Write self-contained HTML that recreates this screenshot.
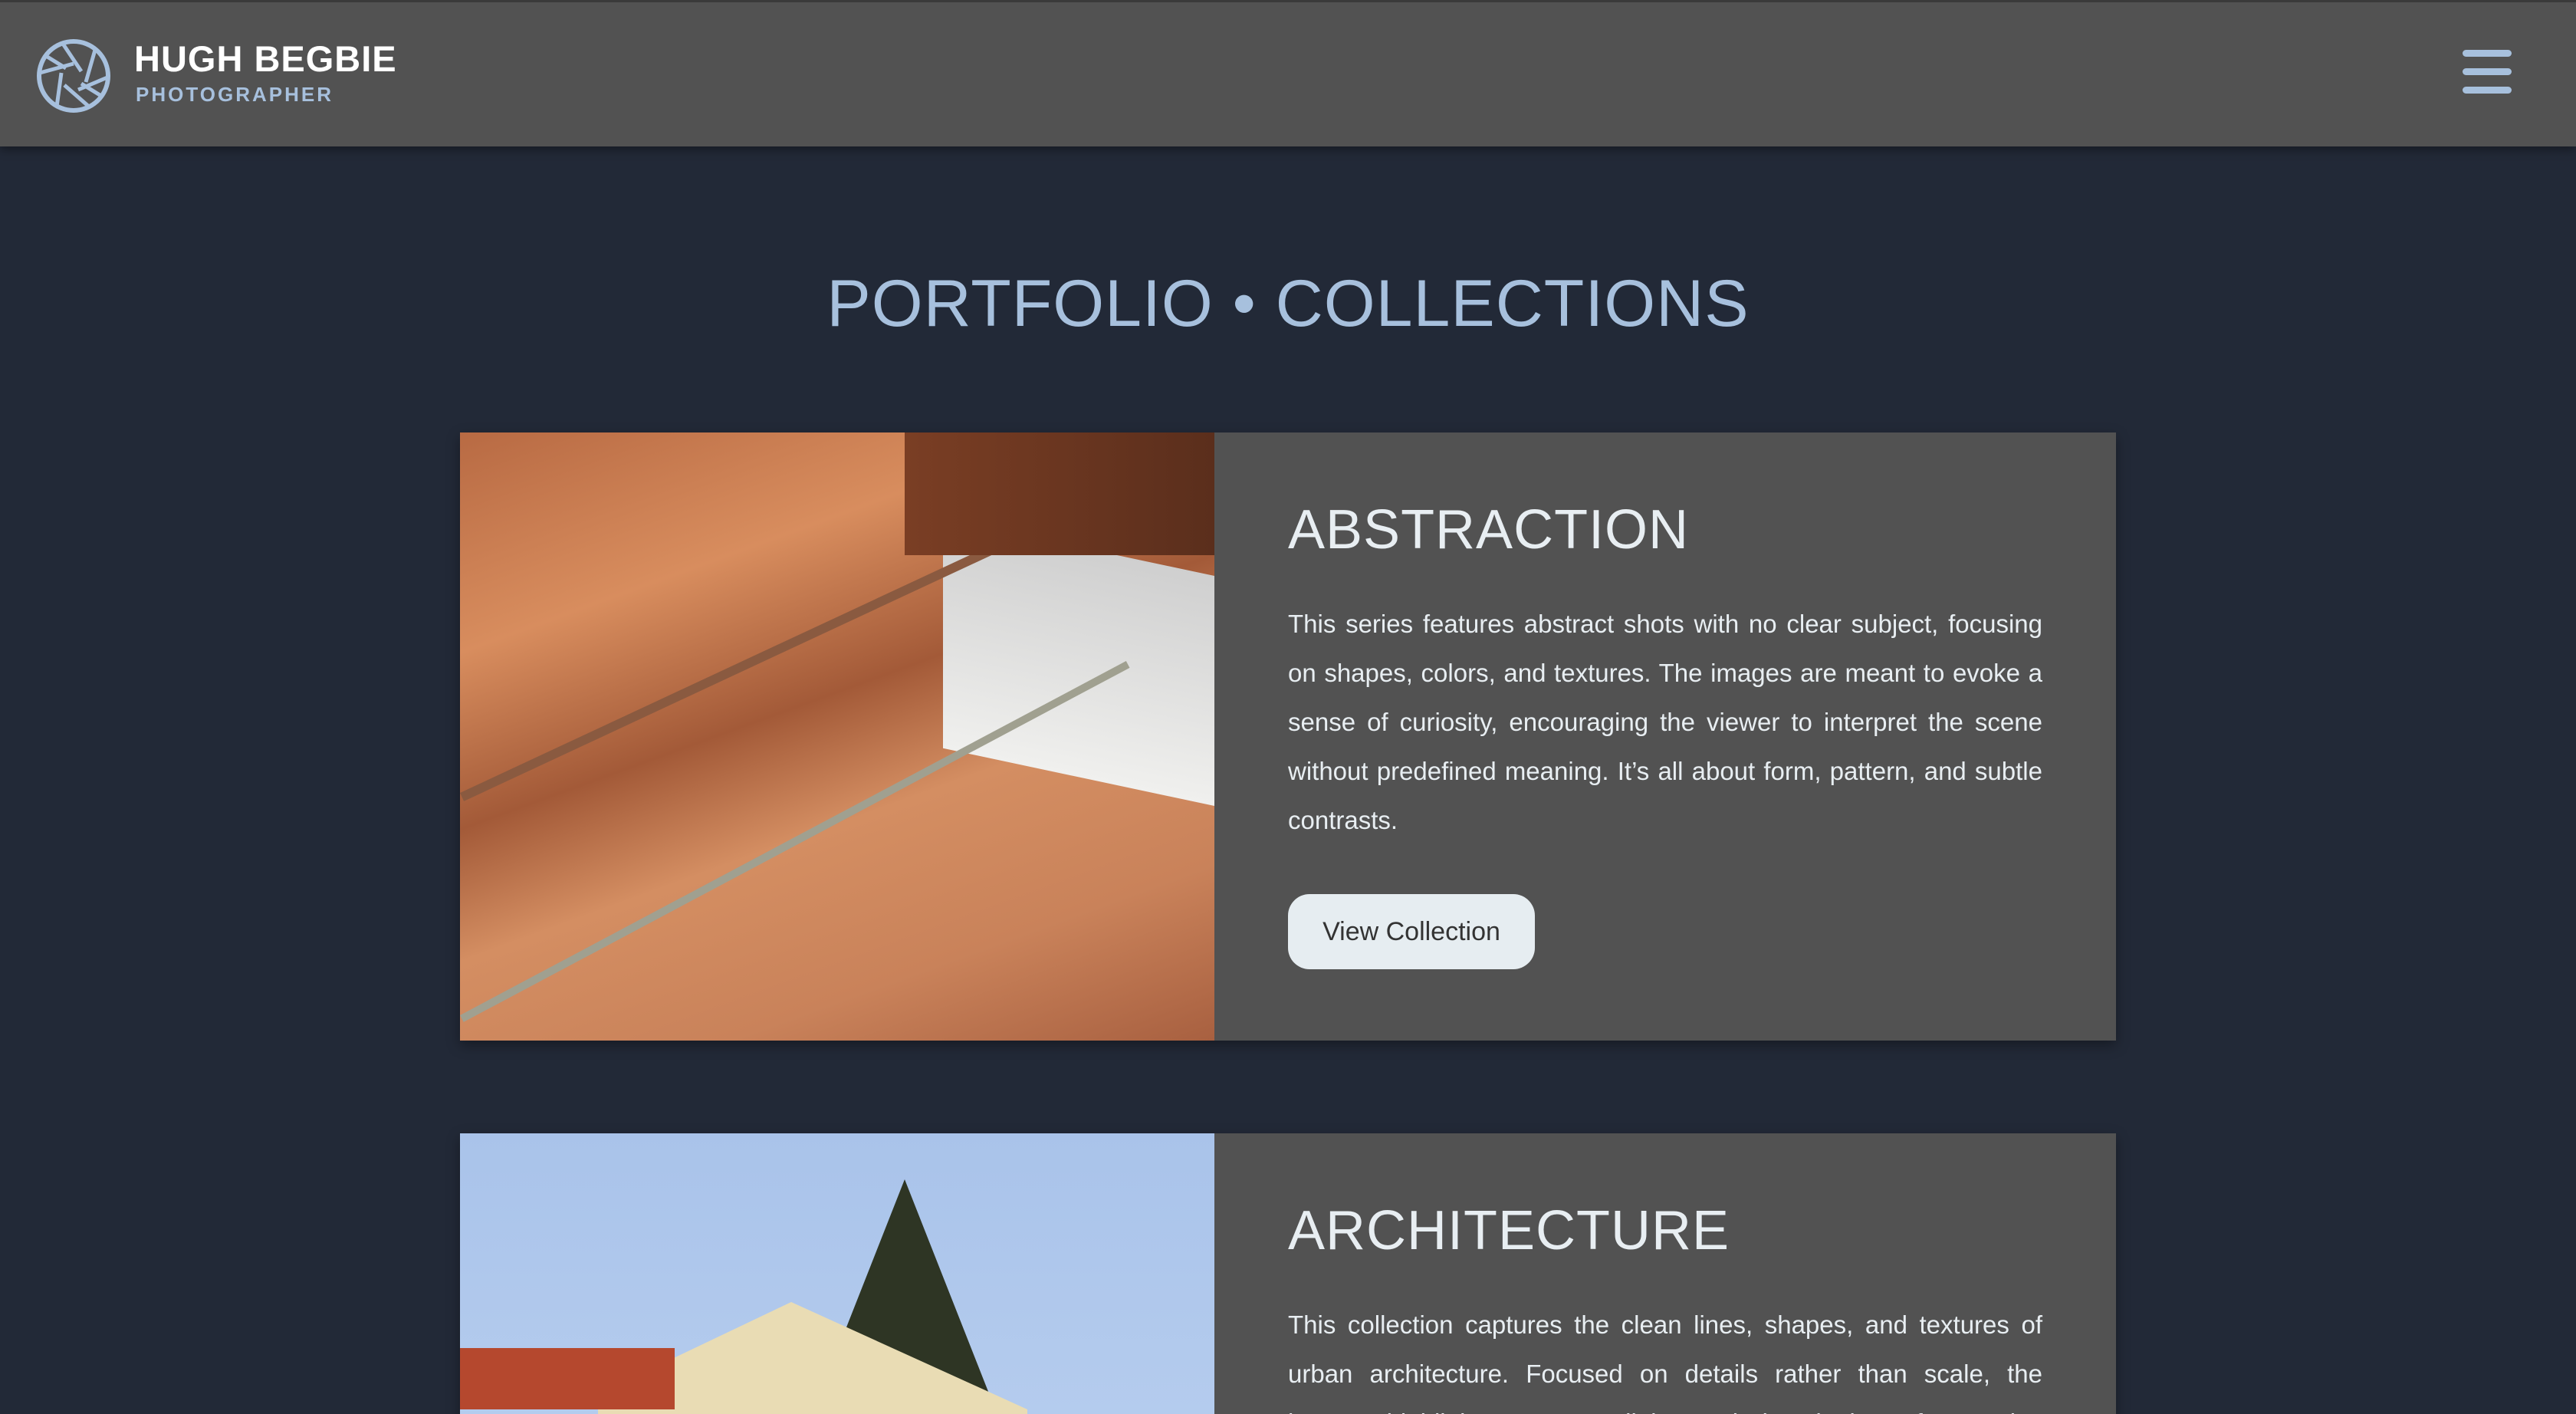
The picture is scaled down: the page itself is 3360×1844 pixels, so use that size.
<!DOCTYPE html>
<html><head><meta charset="utf-8"><style>
*{margin:0;padding:0;box-sizing:border-box}
html,body{width:3360px;height:1844px;overflow:hidden}
body{background:#222937;font-family:"Liberation Sans",sans-serif;position:relative}
.wrap{position:relative;width:3360px;height:1844px;overflow:hidden}
.hdr{position:absolute;left:0;top:0;width:3360px;height:191px;background:#525252;border-top:3px solid #3a3a3a;box-shadow:0 4px 12px rgba(0,0,0,.4);z-index:2}
.logo{position:absolute;left:46px;top:46px;width:100px;height:100px}
.name{position:absolute;left:175px;top:46px;color:#fff;font-weight:bold;font-size:47px;letter-spacing:1px}
.sub{position:absolute;left:177px;top:105px;color:#a7c0dd;font-weight:bold;font-size:26px;letter-spacing:3px}
.burger{position:absolute;left:3212px;top:62px;width:64px}
.burger i{display:block;height:9px;background:#a7c0dd;border-radius:5px;margin-bottom:15px}
h1{position:absolute;left:0;width:3360px;top:347px;text-align:center;color:#a7c0dd;font-size:86px;font-weight:normal;letter-spacing:1px}
.card{position:absolute;left:600px;width:2160px;height:793px;background:#525252;box-shadow:0 6px 16px rgba(0,0,0,.35)}
.img{position:absolute;left:0;top:0;width:984px;height:100%;overflow:hidden}
.txt{position:absolute;left:1080px;top:86px;width:984px;color:#e8eef2}
.txt h2{font-size:72px;font-weight:normal;letter-spacing:1px;margin-bottom:50px}
.txt p{font-size:33px;line-height:64px;text-align:justify;font-weight:normal}
.btn{display:inline-block;margin-top:64px;width:322px;height:98px;border-radius:28px;background:#e6edf1;color:#333;font-size:34px;line-height:98px;text-align:center}
</style></head><body><div class="wrap">
<div class="hdr">
<svg class="logo" viewBox="0 0 100 100" fill="none" stroke="#a7c0dd" stroke-width="6">
<circle cx="50" cy="50" r="45"/>
<g stroke-width="5">
<line x1="36" y1="8" x2="60" y2="44"/><line x1="78" y1="16" x2="66" y2="58"/><line x1="94" y1="52" x2="56" y2="68"/>
<line x1="70" y1="90" x2="38" y2="62"/><line x1="28" y1="90" x2="34" y2="46"/><line x1="6" y1="46" x2="50" y2="34"/>
<line x1="14" y1="24" x2="40" y2="40"/><line x1="86" y1="76" x2="60" y2="60"/>
</g></svg>
<div class="name">HUGH BEGBIE</div>
<div class="sub">PHOTOGRAPHER</div>
<div class="burger"><i></i><i></i><i></i></div>
</div>
<h1>PORTFOLIO • COLLECTIONS</h1>

<div class="card" style="top:564px">
<div class="img" style="background:linear-gradient(160deg,#b86a43 0%,#d88d5e 25%,#a35a38 45%,#d48e62 60%,#c9825a 80%,#a86040 100%)">
<div style="position:absolute;left:630px;top:150px;width:360px;height:300px;background:linear-gradient(180deg,#cfcfcf,#f0f0ee);transform:skewY(12deg)"></div>
<div style="position:absolute;left:0;width:984px;height:12px;background:#8a5a40;transform:rotate(-25deg);transform-origin:0 0;top:470px"></div>
<div style="position:absolute;left:0;width:984px;height:10px;background:#a0a090;transform:rotate(-28deg);transform-origin:0 0;top:760px"></div>
<div style="position:absolute;left:580px;top:0;width:410px;height:160px;background:linear-gradient(90deg,#7a3e24,#5a2e1c)"></div>
</div>
<div class="txt"><h2>ABSTRACTION</h2>
<p>This series features abstract shots with no clear subject, focusing on shapes, colors, and textures. The images are meant to evoke a sense of curiosity, encouraging the viewer to interpret the scene without predefined meaning. It’s all about form, pattern, and subtle contrasts.</p>
<div class="btn">View Collection</div></div>
</div>

<div class="card" style="top:1478px">
<div class="img" style="background:linear-gradient(180deg,#a9c3ea,#c2d6f2)">
<div style="position:absolute;left:450px;top:60px;width:0;height:0;border-left:130px solid transparent;border-right:130px solid transparent;border-bottom:330px solid #2e3524"></div>
<div style="position:absolute;left:180px;top:220px;width:560px;height:200px;background:#e9dcb4;clip-path:polygon(0 60%,45% 0,100% 70%,100% 100%,0 100%)"></div>
<div style="position:absolute;left:0;top:280px;width:280px;height:80px;background:#b5482e"></div>
</div>
<div class="txt"><h2>ARCHITECTURE</h2>
<p>This collection captures the clean lines, shapes, and textures of urban architecture. Focused on details rather than scale, the images highlight geometry, light, and the rhythm of everyday structures found in the built environment around us.</p></div>
</div>
</div></body></html>
